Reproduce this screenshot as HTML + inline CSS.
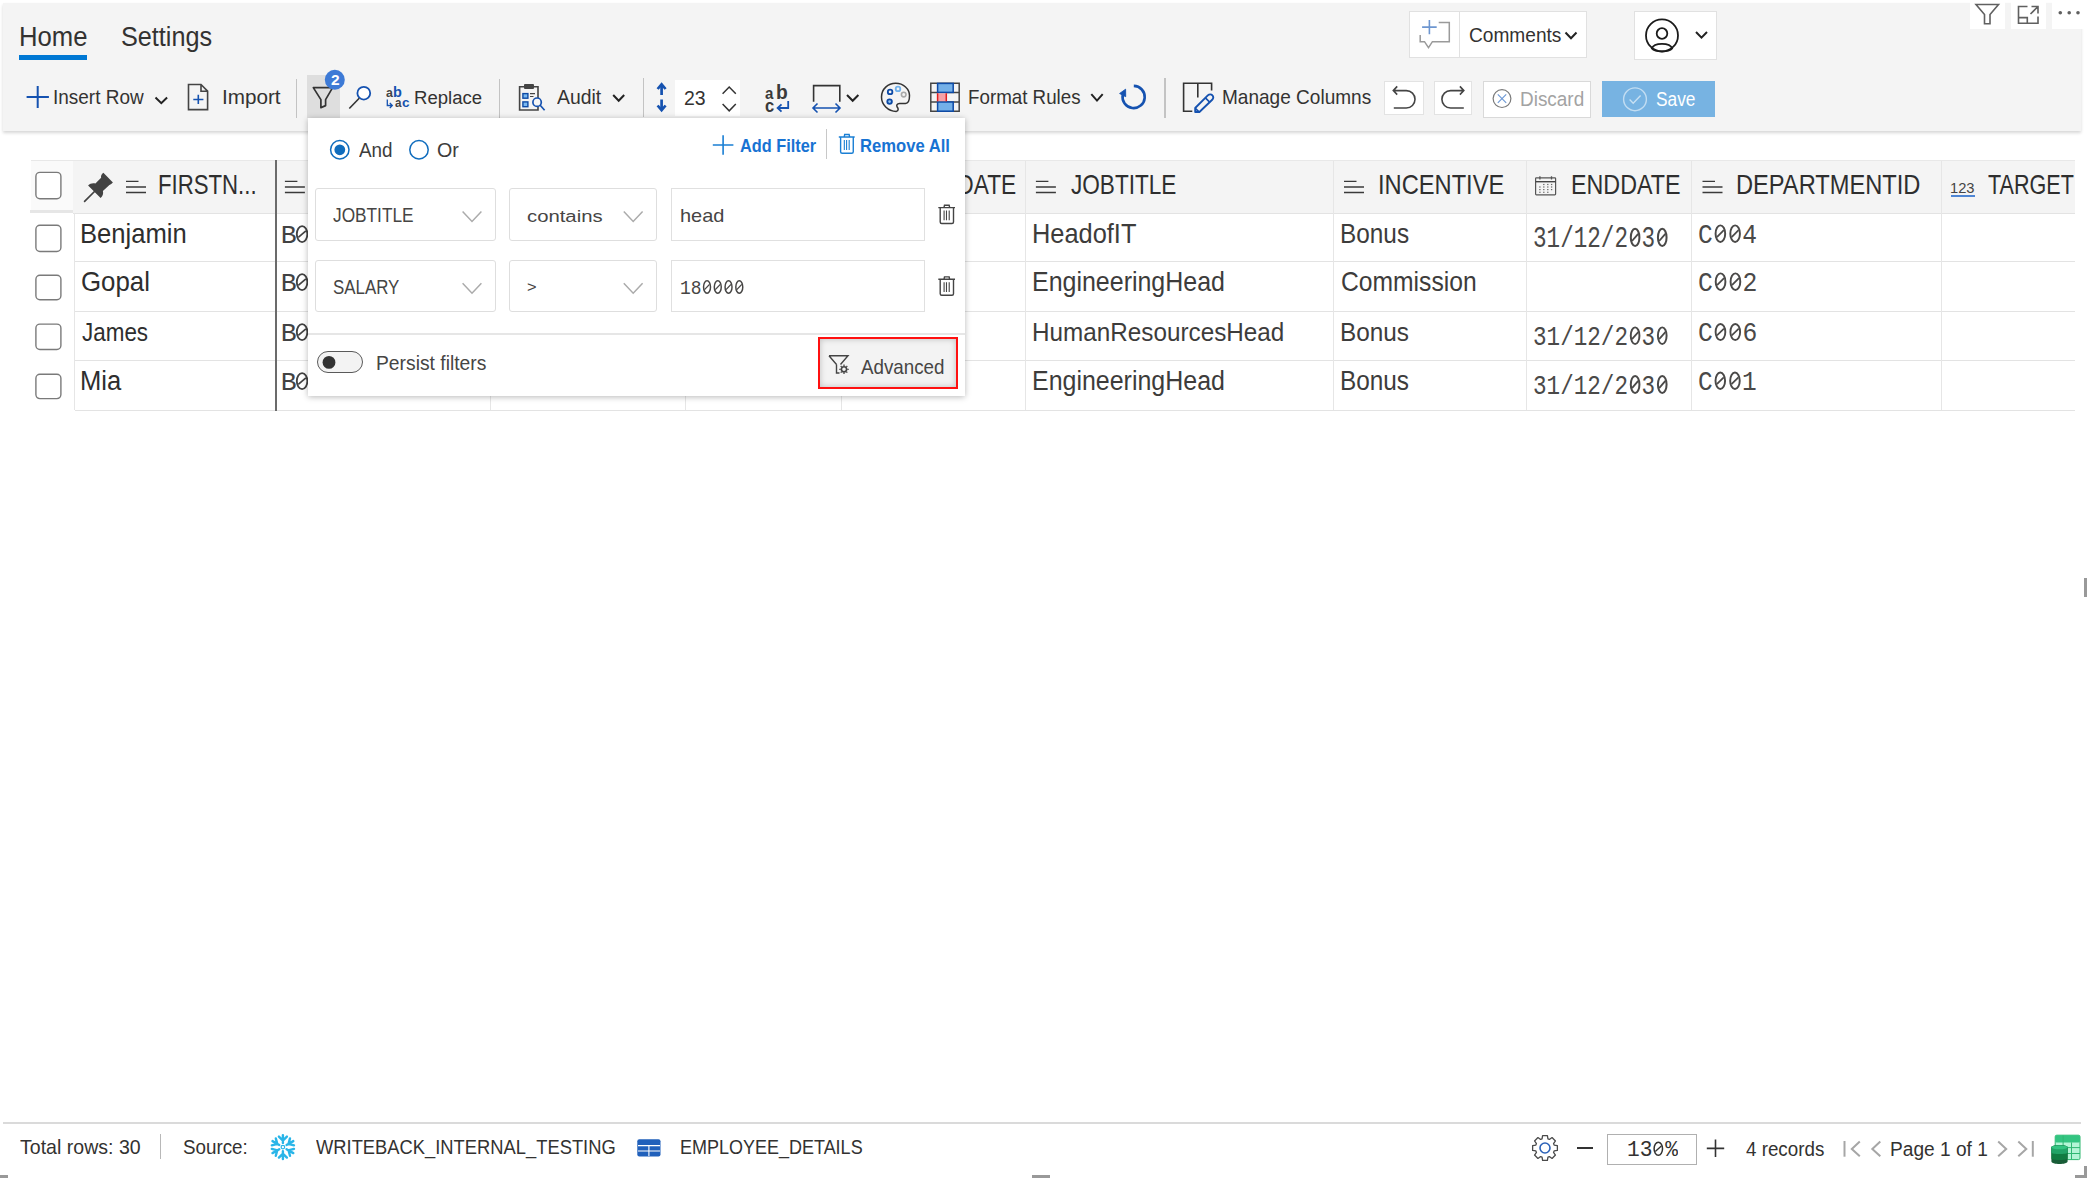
<!DOCTYPE html>
<html><head><meta charset="utf-8"><title>Grid</title>
<style>html,body{margin:0;padding:0;width:2087px;height:1178px;overflow:hidden;background:#fff;font-family:'Liberation Sans', sans-serif;}
body{position:relative;}</style></head>
<body>
<div style="position:absolute;left:0;top:0;width:2087px;height:1178px;z-index:2;"><div style="position:absolute;left:3px;top:3px;width:2078px;height:128px;background:#f4f4f4;border-radius:0px;box-shadow:0 2px 3px rgba(0,0,0,0.16);"></div>
<div style="position:absolute;left:1970px;top:0px;width:35px;height:29px;background:#fff;border-radius:0px;"></div>
<div style="position:absolute;left:2011px;top:0px;width:35px;height:29px;background:#fff;border-radius:0px;"></div>
<div style="position:absolute;left:2052px;top:0px;width:35px;height:29px;background:#fff;border-radius:0px;"></div>
<div style="position:absolute;left:19px;top:55px;width:68px;height:4.5px;background:#0078d4;border-radius:0px;"></div>
<div style="position:absolute;left:1408.7px;top:11px;width:177.89999999999986px;height:47.4px;background:#fff;border:1px solid #e1e1e1;box-sizing:border-box;border-radius:0px;"></div>
<div style="position:absolute;left:1459.2px;top:11.5px;width:1.0px;height:46.5px;background:#e1e1e1;border-radius:0px;"></div>
<div style="position:absolute;left:1634.3px;top:11.3px;width:83.20000000000005px;height:48.3px;background:#fff;border:1px solid #e1e1e1;box-sizing:border-box;border-radius:0px;"></div>
<div style="position:absolute;left:295.9px;top:78.5px;width:1.2000000000000455px;height:39.0px;background:#c3c3c3;border-radius:0px;"></div>
<div style="position:absolute;left:498.7px;top:78.5px;width:1.2000000000000455px;height:39.0px;background:#c3c3c3;border-radius:0px;"></div>
<div style="position:absolute;left:642.9px;top:78px;width:1.2000000000000455px;height:38.7px;background:#c3c3c3;border-radius:0px;"></div>
<div style="position:absolute;left:1164.4px;top:78px;width:1.199999999999818px;height:40px;background:#c3c3c3;border-radius:0px;"></div>
<div style="position:absolute;left:307px;top:75px;width:33px;height:43px;background:#dedede;border-radius:0px;"></div>
<div style="position:absolute;left:524.3px;top:84.3px;width:9.300000000000068px;height:4.400000000000006px;background:#444;border-radius:1px;"></div>
<div style="position:absolute;left:675px;top:80px;width:65.39999999999998px;height:35.5px;background:#fff;border-radius:0px;"></div>
<div style="position:absolute;left:1384.4px;top:80.6px;width:39.299999999999955px;height:34.900000000000006px;background:#fff;border:1px solid #e3e3e3;box-sizing:border-box;border-radius:0px;"></div>
<div style="position:absolute;left:1434.2px;top:80.6px;width:38.299999999999955px;height:34.900000000000006px;background:#fff;border:1px solid #e3e3e3;box-sizing:border-box;border-radius:0px;"></div>
<div style="position:absolute;left:1483.4px;top:80.6px;width:108.0px;height:37.0px;background:#fff;border:1px solid #d9d9d9;box-sizing:border-box;border-radius:0px;"></div>
<div style="position:absolute;left:1601.8px;top:81px;width:113.0px;height:35.7px;background:#77b3e2;border-radius:0px;"></div>
<div style="position:absolute;left:73px;top:160px;width:2001.5px;height:53px;background:#f4f4f4;border-radius:0px;"></div>
<div style="position:absolute;left:30.5px;top:160px;width:42.5px;height:53px;background:#fafafa;border-radius:0px;"></div>
<div style="position:absolute;left:30.5px;top:160px;width:2044.0px;height:1px;background:#e8e8e8;border-radius:0px;"></div>
<div style="position:absolute;left:30px;top:210px;width:43px;height:3px;background:#e6e6e6;border-radius:0px;"></div>
<div style="position:absolute;left:73px;top:212.5px;width:2001.5px;height:1.0px;background:#e3e3e3;border-radius:0px;"></div>
<div style="position:absolute;left:74.5px;top:261.0px;width:2000.0px;height:1.0px;background:#e3e3e3;border-radius:0px;"></div>
<div style="position:absolute;left:74.5px;top:311.3px;width:2000.0px;height:1.0px;background:#e3e3e3;border-radius:0px;"></div>
<div style="position:absolute;left:74.5px;top:360.3px;width:2000.0px;height:1.0px;background:#e3e3e3;border-radius:0px;"></div>
<div style="position:absolute;left:74.5px;top:409.7px;width:2000.0px;height:1.0px;background:#e3e3e3;border-radius:0px;"></div>
<div style="position:absolute;left:74.1px;top:213px;width:1.0px;height:197.2px;background:#e6e6e6;border-radius:0px;"></div>
<div style="position:absolute;left:489.5px;top:161px;width:1.0px;height:249.2px;background:#e6e6e6;border-radius:0px;"></div>
<div style="position:absolute;left:685.0px;top:161px;width:1.0px;height:249.2px;background:#e6e6e6;border-radius:0px;"></div>
<div style="position:absolute;left:841.0px;top:161px;width:1.0px;height:249.2px;background:#e6e6e6;border-radius:0px;"></div>
<div style="position:absolute;left:1024.5px;top:161px;width:1.0px;height:249.2px;background:#e6e6e6;border-radius:0px;"></div>
<div style="position:absolute;left:1333.0px;top:161px;width:1.0px;height:249.2px;background:#e6e6e6;border-radius:0px;"></div>
<div style="position:absolute;left:1525.5px;top:161px;width:1.0px;height:249.2px;background:#e6e6e6;border-radius:0px;"></div>
<div style="position:absolute;left:1691.0px;top:161px;width:1.0px;height:249.2px;background:#e6e6e6;border-radius:0px;"></div>
<div style="position:absolute;left:1941.0px;top:161px;width:1.0px;height:249.2px;background:#e6e6e6;border-radius:0px;"></div>
<div style="position:absolute;left:274.5px;top:160px;width:2.3000000000000114px;height:250.7px;background:#6b6b6b;border-radius:0px;"></div>
<div style="position:absolute;left:1951px;top:195px;width:24px;height:1.5999999999999943px;background:#4f86d4;border-radius:0px;"></div>
<div style="position:absolute;left:3px;top:1122px;width:2077.5px;height:1.7999999999999545px;background:#dadada;border-radius:0px;"></div>
<div style="position:absolute;left:159.6px;top:1133.8px;width:1.200000000000017px;height:25.0px;background:#b8b8b8;border-radius:0px;"></div>
<div style="position:absolute;left:1577px;top:1147.3px;width:16.299999999999955px;height:1.5px;background:#333;border-radius:0px;"></div>
<div style="position:absolute;left:1607.4px;top:1133.5px;width:89.19999999999982px;height:31.700000000000045px;background:#fff;border:1px solid #b0b0b0;box-sizing:border-box;border-radius:0px;"></div>
<div style="position:absolute;left:0px;top:1175px;width:7.7px;height:3px;background:#999;border-radius:0px;"></div>
<div style="position:absolute;left:1032px;top:1175px;width:18px;height:3px;background:#999;border-radius:0px;"></div>
<div style="position:absolute;left:2084px;top:578px;width:3px;height:19px;background:#999;border-radius:0px;"></div>
<div style="position:absolute;left:2084.3px;top:1166px;width:2.699999999999818px;height:12px;background:#999;border-radius:0px;"></div>
<div style="position:absolute;left:2075px;top:1175.1px;width:12px;height:2.900000000000091px;background:#999;border-radius:0px;"></div>
<span style="position:absolute;left:18.95px;top:23px;font-family:'Liberation Sans', sans-serif;font-size:27.25px;line-height:1;font-weight:400;color:#333231;white-space:pre;transform:scaleX(0.9421);transform-origin:0 0;">Home</span>
<span style="position:absolute;left:120.79px;top:23px;font-family:'Liberation Sans', sans-serif;font-size:27.1px;line-height:1;font-weight:400;color:#333231;white-space:pre;transform:scaleX(0.9310);transform-origin:0 0;">Settings</span>
<span style="position:absolute;left:1468.64px;top:25px;font-family:'Liberation Sans', sans-serif;font-size:20.0px;line-height:1;font-weight:400;color:#333231;white-space:pre;transform:scaleX(0.9559);transform-origin:0 0;">Comments</span>
<span style="position:absolute;left:52.89px;top:87px;font-family:'Liberation Sans', sans-serif;font-size:20.43px;line-height:1;font-weight:400;color:#333231;white-space:pre;transform:scaleX(0.9285);transform-origin:0 0;">Insert Row</span>
<span style="position:absolute;left:221.64px;top:87px;font-family:'Liberation Sans', sans-serif;font-size:20.43px;line-height:1;font-weight:400;color:#333231;white-space:pre;transform:scaleX(1.0124);transform-origin:0 0;">Import</span>
<span style="position:absolute;left:385.75px;top:86px;font-family:'Liberation Sans', sans-serif;font-size:13.52px;line-height:1;font-weight:700;color:#444;white-space:pre;transform:scaleX(0.9145);transform-origin:0 0;">a</span>
<span style="position:absolute;left:392.93px;top:85px;font-family:'Liberation Sans', sans-serif;font-size:14.29px;line-height:1;font-weight:700;color:#1552b0;white-space:pre;transform:scaleX(1.0154);transform-origin:0 0;">b</span>
<span style="position:absolute;left:394.67px;top:96px;font-family:'Liberation Sans', sans-serif;font-size:13.33px;line-height:1;font-weight:700;color:#444;white-space:pre;transform:scaleX(0.8729);transform-origin:0 0;">a</span>
<span style="position:absolute;left:401.89px;top:96px;font-family:'Liberation Sans', sans-serif;font-size:13.33px;line-height:1;font-weight:700;color:#1552b0;white-space:pre;transform:scaleX(1.0203);transform-origin:0 0;">c</span>
<span style="position:absolute;left:413.92px;top:88px;font-family:'Liberation Sans', sans-serif;font-size:18.99px;line-height:1;font-weight:400;color:#333231;white-space:pre;transform:scaleX(0.9768);transform-origin:0 0;">Replace</span>
<span style="position:absolute;left:557.30px;top:87px;font-family:'Liberation Sans', sans-serif;font-size:20.43px;line-height:1;font-weight:400;color:#333231;white-space:pre;transform:scaleX(0.9483);transform-origin:0 0;">Audit</span>
<span style="position:absolute;left:684.03px;top:87px;font-family:'Liberation Sans', sans-serif;font-size:21.01px;line-height:1;font-weight:400;color:#333231;white-space:pre;transform:scaleX(0.9277);transform-origin:0 0;">23</span>
<span style="position:absolute;left:765.00px;top:85px;font-family:'Liberation Sans', sans-serif;font-size:17.22px;line-height:1;font-weight:700;color:#3a3a3a;white-space:pre;transform:scaleX(0.8764);transform-origin:0 0;">a</span>
<span style="position:absolute;left:775.85px;top:82px;font-family:'Liberation Sans', sans-serif;font-size:20.86px;line-height:1;font-weight:700;color:#3a3a3a;white-space:pre;transform:scaleX(0.9212);transform-origin:0 0;">b</span>
<span style="position:absolute;left:764.90px;top:98px;font-family:'Liberation Sans', sans-serif;font-size:17.78px;line-height:1;font-weight:700;color:#3a3a3a;white-space:pre;transform:scaleX(0.9336);transform-origin:0 0;">c</span>
<span style="position:absolute;left:967.50px;top:87px;font-family:'Liberation Sans', sans-serif;font-size:20.14px;line-height:1;font-weight:400;color:#333231;white-space:pre;transform:scaleX(0.9321);transform-origin:0 0;">Format Rules</span>
<span style="position:absolute;left:1221.98px;top:87px;font-family:'Liberation Sans', sans-serif;font-size:20.14px;line-height:1;font-weight:400;color:#333231;white-space:pre;transform:scaleX(0.9458);transform-origin:0 0;">Manage Columns</span>
<span style="position:absolute;left:1520.19px;top:90px;font-family:'Liberation Sans', sans-serif;font-size:19.86px;line-height:1;font-weight:400;color:#a3a3a3;white-space:pre;transform:scaleX(0.9533);transform-origin:0 0;">Discard</span>
<span style="position:absolute;left:1655.91px;top:90px;font-family:'Liberation Sans', sans-serif;font-size:19.57px;line-height:1;font-weight:400;color:#fff;white-space:pre;transform:scaleX(0.8860);transform-origin:0 0;">Save</span>
<span style="position:absolute;left:158.32px;top:171px;font-family:'Liberation Sans', sans-serif;font-size:27.1px;line-height:1;font-weight:400;color:#2e2e2e;white-space:pre;transform:scaleX(0.8189);transform-origin:0 0;">FIRSTN...</span>
<span style="position:absolute;left:903.18px;top:171px;font-family:'Liberation Sans', sans-serif;font-size:27.1px;line-height:1;font-weight:400;color:#2e2e2e;white-space:pre;transform:scaleX(0.8389);transform-origin:0 0;">HIREDATE</span>
<span style="position:absolute;left:1070.97px;top:171px;font-family:'Liberation Sans', sans-serif;font-size:27.1px;line-height:1;font-weight:400;color:#2e2e2e;white-space:pre;transform:scaleX(0.8338);transform-origin:0 0;">JOBTITLE</span>
<span style="position:absolute;left:1378.07px;top:171px;font-family:'Liberation Sans', sans-serif;font-size:27.1px;line-height:1;font-weight:400;color:#2e2e2e;white-space:pre;transform:scaleX(0.8738);transform-origin:0 0;">INCENTIVE</span>
<span style="position:absolute;left:1571.14px;top:171px;font-family:'Liberation Sans', sans-serif;font-size:27.1px;line-height:1;font-weight:400;color:#2e2e2e;white-space:pre;transform:scaleX(0.8591);transform-origin:0 0;">ENDDATE</span>
<span style="position:absolute;left:1735.91px;top:171px;font-family:'Liberation Sans', sans-serif;font-size:27.1px;line-height:1;font-weight:400;color:#2e2e2e;white-space:pre;transform:scaleX(0.8727);transform-origin:0 0;">DEPARTMENTID</span>
<span style="position:absolute;left:1950.47px;top:180px;font-family:'Liberation Sans', sans-serif;font-size:15.51px;line-height:1;font-weight:400;color:#444;white-space:pre;transform:scaleX(0.9492);transform-origin:0 0;">123</span>
<div style="position:absolute;left:1942px;top:160px;width:132.5px;height:53px;overflow:hidden;"><div style="position:absolute;left:-1942px;top:-160px;"><span style="position:absolute;left:1987.57px;top:171px;font-family:'Liberation Sans', sans-serif;font-size:27.1px;line-height:1;font-weight:400;color:#2e2e2e;white-space:pre;transform:scaleX(0.7960);transform-origin:0 0;">TARGET</span></div></div>
<span style="position:absolute;left:80.25px;top:221px;font-family:'Liberation Sans', sans-serif;font-size:26.96px;line-height:1;font-weight:400;color:#2e2e2e;white-space:pre;transform:scaleX(0.9501);transform-origin:0 0;">Benjamin</span>
<span style="position:absolute;left:280.75px;top:223px;font-family:'Liberation Mono', monospace;font-size:26.5px;line-height:1;font-weight:400;color:#424242;white-space:pre;letter-spacing:-2.5px;">B  1</span>
<span style="position:absolute;left:1031.57px;top:221px;font-family:'Liberation Sans', sans-serif;font-size:26.96px;line-height:1;font-weight:400;color:#3d3c3b;white-space:pre;transform:scaleX(0.9420);transform-origin:0 0;">HeadofIT</span>
<span style="position:absolute;left:1340.35px;top:221px;font-family:'Liberation Sans', sans-serif;font-size:26.96px;line-height:1;font-weight:400;color:#3d3c3b;white-space:pre;transform:scaleX(0.9037);transform-origin:0 0;">Bonus</span>
<span style="position:absolute;left:1533.34px;top:226px;font-family:'Liberation Mono', monospace;font-size:28.66px;line-height:1;font-weight:400;color:#4a4948;white-space:pre;transform:scaleX(0.7891);transform-origin:0 0;">31/12/2 3 </span>
<span style="position:absolute;left:1698.27px;top:222px;font-family:'Liberation Mono', monospace;font-size:27.76px;line-height:1;font-weight:400;color:#4a4948;white-space:pre;transform:scaleX(0.8848);transform-origin:0 0;">C  4</span>
<span style="position:absolute;left:81.01px;top:269px;font-family:'Liberation Sans', sans-serif;font-size:26.96px;line-height:1;font-weight:400;color:#2e2e2e;white-space:pre;transform:scaleX(0.9577);transform-origin:0 0;">Gopal</span>
<span style="position:absolute;left:280.75px;top:271px;font-family:'Liberation Mono', monospace;font-size:26.5px;line-height:1;font-weight:400;color:#424242;white-space:pre;letter-spacing:-2.5px;">B  1</span>
<span style="position:absolute;left:1031.60px;top:269px;font-family:'Liberation Sans', sans-serif;font-size:26.96px;line-height:1;font-weight:400;color:#3d3c3b;white-space:pre;transform:scaleX(0.9263);transform-origin:0 0;">EngineeringHead</span>
<span style="position:absolute;left:1341.07px;top:269px;font-family:'Liberation Sans', sans-serif;font-size:26.96px;line-height:1;font-weight:400;color:#3d3c3b;white-space:pre;transform:scaleX(0.9151);transform-origin:0 0;">Commission</span>
<span style="position:absolute;left:1698.26px;top:270px;font-family:'Liberation Mono', monospace;font-size:27.76px;line-height:1;font-weight:400;color:#4a4948;white-space:pre;transform:scaleX(0.8926);transform-origin:0 0;">C  2</span>
<span style="position:absolute;left:82.08px;top:319px;font-family:'Liberation Sans', sans-serif;font-size:26.09px;line-height:1;font-weight:400;color:#2e2e2e;white-space:pre;transform:scaleX(0.8602);transform-origin:0 0;">James</span>
<span style="position:absolute;left:280.75px;top:321px;font-family:'Liberation Mono', monospace;font-size:26.5px;line-height:1;font-weight:400;color:#424242;white-space:pre;letter-spacing:-2.5px;">B  1</span>
<span style="position:absolute;left:1031.66px;top:319px;font-family:'Liberation Sans', sans-serif;font-size:26.09px;line-height:1;font-weight:400;color:#3d3c3b;white-space:pre;transform:scaleX(0.9308);transform-origin:0 0;">HumanResourcesHead</span>
<span style="position:absolute;left:1340.35px;top:319px;font-family:'Liberation Sans', sans-serif;font-size:26.09px;line-height:1;font-weight:400;color:#3d3c3b;white-space:pre;transform:scaleX(0.9338);transform-origin:0 0;">Bonus</span>
<span style="position:absolute;left:1533.34px;top:324px;font-family:'Liberation Mono', monospace;font-size:27.76px;line-height:1;font-weight:400;color:#4a4948;white-space:pre;transform:scaleX(0.8147);transform-origin:0 0;">31/12/2 3 </span>
<span style="position:absolute;left:1698.27px;top:321px;font-family:'Liberation Mono', monospace;font-size:26.87px;line-height:1;font-weight:400;color:#4a4948;white-space:pre;transform:scaleX(0.9181);transform-origin:0 0;">C  6</span>
<span style="position:absolute;left:80.25px;top:368px;font-family:'Liberation Sans', sans-serif;font-size:26.81px;line-height:1;font-weight:400;color:#2e2e2e;white-space:pre;transform:scaleX(0.9549);transform-origin:0 0;">Mia</span>
<span style="position:absolute;left:280.75px;top:370px;font-family:'Liberation Mono', monospace;font-size:26.5px;line-height:1;font-weight:400;color:#424242;white-space:pre;letter-spacing:-2.5px;">B  1</span>
<span style="position:absolute;left:1031.60px;top:368px;font-family:'Liberation Sans', sans-serif;font-size:26.81px;line-height:1;font-weight:400;color:#3d3c3b;white-space:pre;transform:scaleX(0.9315);transform-origin:0 0;">EngineeringHead</span>
<span style="position:absolute;left:1340.35px;top:368px;font-family:'Liberation Sans', sans-serif;font-size:26.81px;line-height:1;font-weight:400;color:#3d3c3b;white-space:pre;transform:scaleX(0.9087);transform-origin:0 0;">Bonus</span>
<span style="position:absolute;left:1533.34px;top:373px;font-family:'Liberation Mono', monospace;font-size:28.51px;line-height:1;font-weight:400;color:#4a4948;white-space:pre;transform:scaleX(0.7933);transform-origin:0 0;">31/12/2 3 </span>
<span style="position:absolute;left:1698.28px;top:369px;font-family:'Liberation Mono', monospace;font-size:27.61px;line-height:1;font-weight:400;color:#4a4948;white-space:pre;transform:scaleX(0.8858);transform-origin:0 0;">C  1</span>
<span style="position:absolute;left:19.51px;top:1137px;font-family:'Liberation Sans', sans-serif;font-size:20.29px;line-height:1;font-weight:400;color:#333231;white-space:pre;transform:scaleX(0.9642);transform-origin:0 0;">Total rows: 30</span>
<span style="position:absolute;left:182.95px;top:1137px;font-family:'Liberation Sans', sans-serif;font-size:20.29px;line-height:1;font-weight:400;color:#333231;white-space:pre;transform:scaleX(0.9268);transform-origin:0 0;">Source:</span>
<span style="position:absolute;left:316.40px;top:1137px;font-family:'Liberation Sans', sans-serif;font-size:20.29px;line-height:1;font-weight:400;color:#333231;white-space:pre;transform:scaleX(0.9046);transform-origin:0 0;">WRITEBACK_INTERNAL_TESTING</span>
<span style="position:absolute;left:680.46px;top:1137px;font-family:'Liberation Sans', sans-serif;font-size:20.29px;line-height:1;font-weight:400;color:#333231;white-space:pre;transform:scaleX(0.8870);transform-origin:0 0;">EMPLOYEE_DETAILS</span>
<span style="position:absolute;left:1626.52px;top:1140px;font-family:'Liberation Mono', monospace;font-size:21.64px;line-height:1;font-weight:400;color:#333231;white-space:pre;transform:scaleX(0.9794);transform-origin:0 0;">13 %</span>
<span style="position:absolute;left:1745.82px;top:1139px;font-family:'Liberation Sans', sans-serif;font-size:20.71px;line-height:1;font-weight:400;color:#333231;white-space:pre;transform:scaleX(0.9075);transform-origin:0 0;">4 records</span>
<span style="position:absolute;left:1890.07px;top:1139px;font-family:'Liberation Sans', sans-serif;font-size:20.0px;line-height:1;font-weight:400;color:#333231;white-space:pre;transform:scaleX(0.9561);transform-origin:0 0;">Page 1 of 1</span></div>
<svg style="position:absolute;left:0;top:0;z-index:3;" width="2087" height="1178" viewBox="0 0 2087 1178" fill="none"><ellipse cx="302.09" cy="234.12" rx="5.30" ry="7.95" stroke="#424242" stroke-width="1.86"/><path d="M298.28,237.46 L305.91,230.78" stroke="#424242" stroke-width="1.67"/>
<ellipse cx="315.50" cy="234.12" rx="5.30" ry="7.95" stroke="#424242" stroke-width="1.86"/><path d="M311.68,237.46 L319.31,230.78" stroke="#424242" stroke-width="1.67"/>
<ellipse cx="1635.11" cy="237.40" rx="4.31" ry="8.60" stroke="#4a4948" stroke-width="2.01"/><path d="M1632.01,241.01 L1638.22,233.79" stroke="#4a4948" stroke-width="1.81"/>
<ellipse cx="1662.25" cy="237.40" rx="4.31" ry="8.60" stroke="#4a4948" stroke-width="2.01"/><path d="M1659.15,241.01 L1665.36,233.79" stroke="#4a4948" stroke-width="1.81"/>
<ellipse cx="1720.38" cy="233.70" rx="4.80" ry="8.33" stroke="#4a4948" stroke-width="1.94"/><path d="M1716.92,237.20 L1723.83,230.20" stroke="#4a4948" stroke-width="1.75"/>
<ellipse cx="1735.12" cy="233.70" rx="4.80" ry="8.33" stroke="#4a4948" stroke-width="1.94"/><path d="M1731.66,237.20 L1738.57,230.20" stroke="#4a4948" stroke-width="1.75"/>
<ellipse cx="302.09" cy="282.12" rx="5.30" ry="7.95" stroke="#424242" stroke-width="1.86"/><path d="M298.28,285.46 L305.91,278.78" stroke="#424242" stroke-width="1.67"/>
<ellipse cx="315.50" cy="282.12" rx="5.30" ry="7.95" stroke="#424242" stroke-width="1.86"/><path d="M311.68,285.46 L319.31,278.78" stroke="#424242" stroke-width="1.67"/>
<ellipse cx="1720.56" cy="281.70" rx="4.85" ry="8.33" stroke="#4a4948" stroke-width="1.94"/><path d="M1717.07,285.20 L1724.05,278.20" stroke="#4a4948" stroke-width="1.75"/>
<ellipse cx="1735.43" cy="281.70" rx="4.85" ry="8.33" stroke="#4a4948" stroke-width="1.94"/><path d="M1731.93,285.20 L1738.92,278.20" stroke="#4a4948" stroke-width="1.75"/>
<ellipse cx="302.09" cy="332.12" rx="5.30" ry="7.95" stroke="#424242" stroke-width="1.86"/><path d="M298.28,335.46 L305.91,328.78" stroke="#424242" stroke-width="1.67"/>
<ellipse cx="315.50" cy="332.12" rx="5.30" ry="7.95" stroke="#424242" stroke-width="1.86"/><path d="M311.68,335.46 L319.31,328.78" stroke="#424242" stroke-width="1.67"/>
<ellipse cx="1635.11" cy="335.70" rx="4.34" ry="8.33" stroke="#4a4948" stroke-width="1.94"/><path d="M1631.99,339.20 L1638.24,332.20" stroke="#4a4948" stroke-width="1.75"/>
<ellipse cx="1662.25" cy="335.70" rx="4.34" ry="8.33" stroke="#4a4948" stroke-width="1.94"/><path d="M1659.13,339.20 L1665.38,332.20" stroke="#4a4948" stroke-width="1.75"/>
<ellipse cx="1720.47" cy="332.00" rx="4.86" ry="8.06" stroke="#4a4948" stroke-width="1.88"/><path d="M1716.97,335.38 L1723.97,328.61" stroke="#4a4948" stroke-width="1.69"/>
<ellipse cx="1735.27" cy="332.00" rx="4.86" ry="8.06" stroke="#4a4948" stroke-width="1.88"/><path d="M1731.77,335.38 L1738.77,328.61" stroke="#4a4948" stroke-width="1.69"/>
<ellipse cx="302.09" cy="381.12" rx="5.30" ry="7.95" stroke="#424242" stroke-width="1.86"/><path d="M298.28,384.46 L305.91,377.78" stroke="#424242" stroke-width="1.67"/>
<ellipse cx="315.50" cy="381.12" rx="5.30" ry="7.95" stroke="#424242" stroke-width="1.86"/><path d="M311.68,384.46 L319.31,377.78" stroke="#424242" stroke-width="1.67"/>
<ellipse cx="1635.11" cy="384.45" rx="4.32" ry="8.55" stroke="#4a4948" stroke-width="2.00"/><path d="M1632.01,388.04 L1638.22,380.86" stroke="#4a4948" stroke-width="1.80"/>
<ellipse cx="1662.25" cy="384.45" rx="4.32" ry="8.55" stroke="#4a4948" stroke-width="2.00"/><path d="M1659.14,388.04 L1665.36,380.86" stroke="#4a4948" stroke-width="1.80"/>
<ellipse cx="1720.29" cy="380.75" rx="4.78" ry="8.28" stroke="#4a4948" stroke-width="1.93"/><path d="M1716.85,384.23 L1723.73,377.27" stroke="#4a4948" stroke-width="1.74"/>
<ellipse cx="1734.96" cy="380.75" rx="4.78" ry="8.28" stroke="#4a4948" stroke-width="1.93"/><path d="M1731.52,384.23 L1738.40,377.27" stroke="#4a4948" stroke-width="1.74"/>
<ellipse cx="1658.31" cy="1148.75" rx="4.22" ry="6.49" stroke="#333231" stroke-width="1.51"/><path d="M1655.27,1151.48 L1661.35,1146.02" stroke="#333231" stroke-width="1.36"/></svg>
<svg style="position:absolute;left:0;top:0;z-index:5;" width="2087" height="1178" viewBox="0 0 2087 1178" fill="none"><path d="M1976,4.5 H1998.5 L1990,14.5 V23.8 H1984.5 V14.5 Z" stroke="#606060" stroke-width="1.6" stroke-linejoin="miter"/>
<path d="M2027.5,6.5 H2018.5 V23.2 H2038 V16.5 M2018.5,17.6 H2027.3 V23.2 M2031.5,6.5 H2038 V13.5 M2038,6.5 L2030.5,14" stroke="#606060" stroke-width="1.6"/>
<circle cx="2060.3" cy="12.8" r="1.8" fill="#606060"/>
<circle cx="2069.2" cy="12.8" r="1.8" fill="#606060"/>
<circle cx="2078" cy="12.8" r="1.8" fill="#606060"/>
<path d="M1438.7,22.4 H1449.3 V41.7 H1432.4 L1428.5,47.7 L1424.5,41.7 H1420.2 V35" stroke="#9a9a9a" stroke-width="1.5"/>
<path d="M1422.1,27.1 H1436.7 M1429.4,20 V34.3" stroke="#6d96d0" stroke-width="1.6"/>
<path d="M1565.5,32.5 L1571,38.3 L1576.5,32.5" stroke="#222" stroke-width="2"/>
<circle cx="1662" cy="35.4" r="16" stroke="#1b1b1b" stroke-width="1.8"/>
<circle cx="1662" cy="33.5" r="5.3" stroke="#1b1b1b" stroke-width="1.8"/>
<path d="M1651.8,48.5 C1654,42.3 1670,42.3 1672.2,48.5 C1668.5,52.5 1655.5,52.5 1651.8,48.5 Z" stroke="#1b1b1b" stroke-width="1.8"/>
<path d="M1696,32 L1701.5,37.6 L1707,32" stroke="#222" stroke-width="2"/>
<path d="M26.6,97 H48.9 M37.7,86 V108" stroke="#1552b0" stroke-width="2"/>
<path d="M155.5,97.5 L161.3,103.2 L167.1,97.5" stroke="#222" stroke-width="2"/>
<path d="M188.5,84.5 H201 L207.6,91.2 V109.6 H188.5 Z M201,84.5 V91.2 H207.6" stroke="#444" stroke-width="1.6" stroke-linejoin="miter"/>
<path d="M193.3,99.5 H203.4 M198.3,94.8 V104" stroke="#1552b0" stroke-width="1.6"/>
<path d="M313.3,87.6 H332.6 L325.6,99.6 V105.6 L320.9,107.6 V99.6 Z" stroke="#333" stroke-width="1.7" stroke-linejoin="round"/>
<circle cx="334.8" cy="79.8" r="10" fill="#3d7ad6"/>
<circle cx="363.8" cy="93.2" r="6.4" fill="#fff" stroke="#1552b0" stroke-width="1.8"/>
<path d="M349.3,108.5 L359.2,98.3" stroke="#333" stroke-width="1.6"/>
<path d="M387.3,99.5 V105.5 H392 M389.8,103 L392.3,105.5 L389.8,108" stroke="#1552b0" stroke-width="1.3"/>
<path d="M519.6,86.8 H538 V110 H519.6 Z" stroke="#444" stroke-width="1.6"/>
<rect x="522.9" y="93.6" width="5" height="4.6" fill="#7ab8f0" stroke="#0d4aa6" stroke-width="1.4"/>
<rect x="522.9" y="101.9" width="5" height="4.8" fill="#7ab8f0" stroke="#0d4aa6" stroke-width="1.4"/>
<path d="M530,93.6 H535 M530,96.5 H533.5" stroke="#444" stroke-width="1.2"/>
<circle cx="537.1" cy="102.2" r="4.2" fill="#f6f6f6" stroke="#1552b0" stroke-width="1.7"/>
<path d="M540.2,105.3 L544.6,110.2" stroke="#1552b0" stroke-width="1.7"/>
<path d="M613.2,95 L618.7,100.8 L624.2,95" stroke="#222" stroke-width="2"/>
<path d="M661.6,84.5 V95 M661.6,99.5 V110" stroke="#1552b0" stroke-width="2.7"/>
<path d="M657.6,89 L661.6,84.3 L665.6,89 M657.6,105.5 L661.6,110.2 L665.6,105.5" stroke="#1552b0" stroke-width="2.7" stroke-linejoin="miter"/>
<path d="M722.6,93.8 L729.2,87 L735.8,93.8 M722.6,104 L729.2,110.8 L735.8,104" stroke="#333" stroke-width="1.5"/>
<path d="M788.2,101 V108 H778 M781.5,104.3 L777.6,108 L781.5,111.7" stroke="#1552b0" stroke-width="1.8"/>
<path d="M813.6,101.8 V85.6 H839.8 V101.8" stroke="#333" stroke-width="1.6"/>
<path d="M813,108 H840 M817.5,103.5 L813,108 L817.5,112.5 M835.5,103.5 L840,108 L835.5,112.5" stroke="#1552b0" stroke-width="1.6"/>
<path d="M847,95 L852.7,100.8 L858.4,95" stroke="#222" stroke-width="2"/>
<path d="M895.7,83.3 C903.5,83.3 909.5,89 909.5,95.5 C909.5,99.5 908.5,103.4 905.5,103.4 L899.5,103.4 C897,103.4 896.2,105.3 897.2,107 C898.6,108.8 898.6,110.6 896.3,111.4 C887.8,111.4 881.5,104.5 881.5,97 C881.5,89 888,83.3 895.7,83.3 Z" stroke="#333" stroke-width="1.5"/>
<circle cx="890.1" cy="91.9" r="2.3" stroke="#0d4aa6" stroke-width="1.8"/>
<circle cx="898" cy="88.9" r="2.3" stroke="#72b2ec" stroke-width="1.8"/>
<circle cx="903.7" cy="94.6" r="2.3" stroke="#a8a8a8" stroke-width="1.6"/>
<circle cx="889.6" cy="101.6" r="2.3" fill="#8fc2f0" stroke="#0d4aa6" stroke-width="1.8"/>
<path d="M930.8,83.2 H959.2 V111.3 H930.8 Z M930.8,92.6 H959.2 M930.8,102 H959.2" stroke="#454545" stroke-width="1.5"/>
<rect x="937.6" y="83.4" width="15.6" height="9" fill="#74b0e8" stroke="#0d4aa6" stroke-width="1.5"/>
<rect x="937.6" y="102" width="15.6" height="9.2" fill="#74b0e8" stroke="#0d4aa6" stroke-width="1.5"/>
<rect x="937.6" y="93.4" width="8.7" height="7.8" fill="#f7a1a6"/>
<path d="M937.6,93.3 V101.3 M946.3,93.3 V101.3" stroke="#e01e1e" stroke-width="1.5"/>
<path d="M1091.3,94.2 L1097,100.6 L1102.7,94.2" stroke="#222" stroke-width="2"/>
<path d="M1133.8,85.9 A11.1,11.1 0 1 1 1122.7,95" stroke="#1552b0" stroke-width="2.6"/>
<path d="M1119.6,93.5 L1125.6,89.2 L1125.7,96.7 Z" fill="#1552b0" stroke="#1552b0" stroke-width="0.9" stroke-linejoin="round"/>
<path d="M1211.6,90.5 V83.2 H1183.6 V111.2 H1192.3 M1197.8,83.2 V97.4" stroke="#333" stroke-width="1.6"/>
<path d="M1195.2,112 L1195.2,108 L1207.8,95.4 C1209.3,94 1211.3,94 1212.4,95.4 C1213.6,96.6 1213.6,98.5 1212.2,99.8 L1199.4,112 Z" fill="#f4f4f4" stroke="#1552b0" stroke-width="1.9" stroke-linejoin="round"/>
<path d="M1205.4,97.8 L1209.9,102.3 M1195.6,108.6 L1198.8,111.6" stroke="#1552b0" stroke-width="1.7"/>
<path d="M1393.3,90.6 H1406.3 A8.7,8.7 0 0 1 1406.3,108 H1393.8 M1397.2,86.4 L1393.3,90.6 L1397.2,94.6" stroke="#444" stroke-width="1.6"/>
<path d="M1463.8,90.6 H1450.6 A8.7,8.7 0 0 0 1450.6,108 H1463.8 M1459.9,86.4 L1463.8,90.6 L1459.9,94.6" stroke="#444" stroke-width="1.6"/>
<circle cx="1502" cy="98.6" r="8.9" stroke="#7a7a7a" stroke-width="1.2"/>
<path d="M1497.8,94.4 L1506.2,102.8 M1506.2,94.4 L1497.8,102.8" stroke="#6f9ad6" stroke-width="1.2"/>
<circle cx="1635" cy="99.3" r="11.4" stroke="rgba(255,255,255,0.55)" stroke-width="1.4"/>
<path d="M1629.6,99.6 L1633.2,103.2 L1640.6,95.6" stroke="rgba(255,255,255,0.6)" stroke-width="1.4"/>
<rect x="35.9" y="172.4" width="25" height="26.4" rx="4" fill="#fff" stroke="#7a7a7a" stroke-width="1.4"/>
<rect x="35.9" y="225.3" width="25" height="26.20000000000001" rx="4" fill="#fff" stroke="#7a7a7a" stroke-width="1.4"/>
<rect x="35.9" y="275.3" width="25" height="24.4" rx="4" fill="#fff" stroke="#7a7a7a" stroke-width="1.4"/>
<rect x="35.9" y="324.1" width="25" height="25.4" rx="4" fill="#fff" stroke="#7a7a7a" stroke-width="1.4"/>
<rect x="35.9" y="374.2" width="25" height="24.4" rx="4" fill="#fff" stroke="#7a7a7a" stroke-width="1.4"/>
<path d="M103.4,172.8 L112.9,182.6 C111.8,183.9 110.8,184.6 109.4,184.9 L102.9,191 C103.6,193.6 102.8,196.3 100.6,198 L88.1,185.6 C89.9,183.6 92.9,182.8 95.4,183.6 L101.1,177.8 C100.7,175.9 101.6,174.1 103.4,172.8 Z" fill="#424242"/>
<path d="M84.6,201.3 L95,191" stroke="#424242" stroke-width="1.7" stroke-linecap="round"/>
<path d="M126,181.4 H138.5 M126,187 H146 M126,192.5 H146" stroke="#3a3a3a" stroke-width="1.4"/>
<path d="M284.9,181.4 H297.4 M284.9,187 H304.9 M284.9,192.5 H304.9" stroke="#3a3a3a" stroke-width="1.4"/>
<path d="M1035.9,181.4 H1048.4 M1035.9,187 H1055.9 M1035.9,192.5 H1055.9" stroke="#3a3a3a" stroke-width="1.4"/>
<path d="M1344,181.4 H1356.5 M1344,187 H1364 M1344,192.5 H1364" stroke="#3a3a3a" stroke-width="1.4"/>
<rect x="1535.6" y="177.8" width="20" height="17" rx="0.8" stroke="#555" stroke-width="1.2"/>
<path d="M1535.6,181.7 H1555.6" stroke="#444" stroke-width="1.4"/>
<path d="M1539.9,176.2 V179.6 M1551.5,176.2 V179.6" stroke="#555" stroke-width="1.3"/>
<rect x="1543.1499999999999" y="183.9" width="1.3" height="1.2" fill="#666"/>
<rect x="1547.1499999999999" y="183.9" width="1.3" height="1.2" fill="#666"/>
<rect x="1550.9499999999998" y="183.9" width="1.3" height="1.2" fill="#666"/>
<rect x="1539.25" y="186.4" width="1.3" height="1.2" fill="#666"/>
<rect x="1543.1499999999999" y="186.4" width="1.3" height="1.2" fill="#666"/>
<rect x="1547.1499999999999" y="186.4" width="1.3" height="1.2" fill="#666"/>
<rect x="1550.9499999999998" y="186.4" width="1.3" height="1.2" fill="#666"/>
<rect x="1539.25" y="189.0" width="1.3" height="1.2" fill="#666"/>
<rect x="1543.1499999999999" y="189.0" width="1.3" height="1.2" fill="#666"/>
<rect x="1547.1499999999999" y="189.0" width="1.3" height="1.2" fill="#666"/>
<rect x="1550.9499999999998" y="189.0" width="1.3" height="1.2" fill="#666"/>
<rect x="1539.25" y="191.70000000000002" width="1.3" height="1.2" fill="#666"/>
<rect x="1543.1499999999999" y="191.70000000000002" width="1.3" height="1.2" fill="#666"/>
<rect x="1547.1499999999999" y="191.70000000000002" width="1.3" height="1.2" fill="#666"/>
<path d="M1702.5,181.4 H1715.0 M1702.5,187 H1722.5 M1702.5,192.5 H1722.5" stroke="#3a3a3a" stroke-width="1.4"/>
<path d="M282.90,1142.90 L282.90,1135.10 M286.90,1136.60 L282.90,1140.60 L278.90,1136.60 M279.26,1145.00 L272.51,1141.10 M275.81,1138.39 L277.27,1143.85 L271.81,1145.31 M279.26,1149.20 L272.51,1153.10 M271.81,1148.89 L277.27,1150.35 L275.81,1155.81 M282.90,1151.30 L282.90,1159.10 M278.90,1157.60 L282.90,1153.60 L286.90,1157.60 M286.54,1149.20 L293.29,1153.10 M289.99,1155.81 L288.53,1150.35 L293.99,1148.89 M286.54,1145.00 L293.29,1141.10 M293.99,1145.31 L288.53,1143.85 L289.99,1138.39" stroke="#29b5e8" stroke-width="2.4" stroke-linecap="round"/>
<circle cx="282.9" cy="1147.1" r="1.8" stroke="#29b5e8" stroke-width="1.2"/>
<rect x="637.3" y="1139.3" width="23.2" height="17.2" rx="2" fill="#2060bb"/>
<path d="M638,1145.6 H660 M638,1151 H660 M648.9,1145.6 V1156" stroke="#fff" stroke-width="1.1"/>
<path d="M1557.37,1145.60 L1557.37,1150.40 L1554.14,1150.95 L1553.54,1152.38 L1555.45,1155.05 L1552.05,1158.45 L1549.38,1156.54 L1547.95,1157.14 L1547.40,1160.37 L1542.60,1160.37 L1542.05,1157.14 L1540.62,1156.54 L1537.95,1158.45 L1534.55,1155.05 L1536.46,1152.38 L1535.86,1150.95 L1532.63,1150.40 L1532.63,1145.60 L1535.86,1145.05 L1536.46,1143.62 L1534.55,1140.95 L1537.95,1137.55 L1540.62,1139.46 L1542.05,1138.86 L1542.60,1135.63 L1547.40,1135.63 L1547.95,1138.86 L1549.38,1139.46 L1552.05,1137.55 L1555.45,1140.95 L1553.54,1143.62 L1554.14,1145.05 Z" stroke="#4a4a4a" stroke-width="1.3" stroke-linejoin="round"/>
<circle cx="1545" cy="1148" r="5" stroke="#2c62b8" stroke-width="1.6"/>
<path d="M1706.8,1148.4 H1724.2 M1715.5,1139.6 V1157.1" stroke="#333" stroke-width="1.6"/>
<path d="M1844.5,1141 V1156.7" stroke="#a6a6a6" stroke-width="2"/>
<path d="M1859.8,1141.5 L1851.8,1148.9 L1859.8,1156.3 M1880.3,1141.5 L1872.3,1148.9 L1880.3,1156.3" stroke="#a6a6a6" stroke-width="2"/>
<path d="M1998.2,1141.5 L2006.2,1148.9 L1998.2,1156.3 M2018.3,1141.5 L2026.3,1148.9 L2018.3,1156.3" stroke="#a6a6a6" stroke-width="2"/>
<path d="M2032.8,1141 V1156.7" stroke="#a6a6a6" stroke-width="2"/>
<rect x="2055.2" y="1135.2" width="24.8" height="24.4" rx="1.5" fill="#b4f5d6" stroke="#2db86f" stroke-width="1"/>
<rect x="2055.2" y="1135.2" width="24.8" height="7.2" rx="1.5" fill="#33c481"/>
<path d="M2063.1,1135.5 V1159.5 M2071.5,1142.4 V1159.5 M2055.5,1147.6 H2080 M2055.5,1153.5 H2080" stroke="#2fb872" stroke-width="1"/>
<path d="M2051.4,1147.3 C2051.4,1144.5 2067.6,1144.5 2067.6,1147.3 V1161.3 C2067.6,1165 2051.4,1165 2051.4,1161.3 Z" fill="#185c37"/>
<path d="M2051.4,1147.3 C2051.4,1144.5 2067.6,1144.5 2067.6,1147.3 V1158.5 C2067.6,1160.5 2051.4,1160.5 2051.4,1158.5 Z" fill="#107c41"/>
<path d="M2051.4,1147.3 C2051.4,1144.5 2067.6,1144.5 2067.6,1147.3 V1152.5 C2067.6,1154.5 2051.4,1154.5 2051.4,1152.5 Z" fill="#21a366"/>
<ellipse cx="2059.5" cy="1147.3" rx="8.1" ry="1.9" fill="#33c481"/></svg>
<div style="position:absolute;left:0;top:0;width:2087px;height:1178px;z-index:6;"><span style="position:absolute;left:330.53px;top:72px;font-family:'Liberation Sans', sans-serif;font-size:15.43px;line-height:1;font-weight:700;color:#fff;white-space:pre;transform:scaleX(1.0052);transform-origin:0 0;">2</span></div>
<div style="position:absolute;left:0;top:0;width:2087px;height:1178px;z-index:10;"><div style="position:absolute;left:307.5px;top:118px;width:657.5px;height:277.5px;background:#fff;border-radius:0px;box-shadow:0 1px 6px rgba(0,0,0,0.28);"></div>
<div style="position:absolute;left:826.1px;top:128.7px;width:1.1999999999999318px;height:30.80000000000001px;background:#c8c8c8;border-radius:0px;"></div>
<div style="position:absolute;left:315px;top:188.3px;width:181px;height:52.5px;background:#fff;border:1.3px solid #dedede;box-sizing:border-box;border-radius:3px;"></div>
<div style="position:absolute;left:509px;top:188.3px;width:148.29999999999995px;height:52.5px;background:#fff;border:1.3px solid #dedede;box-sizing:border-box;border-radius:3px;"></div>
<div style="position:absolute;left:670.5px;top:188.3px;width:254.5px;height:52.5px;background:#fff;border:1.5px solid #e0e0e0;box-sizing:border-box;border-radius:0px;"></div>
<div style="position:absolute;left:315px;top:260px;width:181px;height:52px;background:#fff;border:1.3px solid #dedede;box-sizing:border-box;border-radius:3px;"></div>
<div style="position:absolute;left:509px;top:260px;width:148.29999999999995px;height:52px;background:#fff;border:1.3px solid #dedede;box-sizing:border-box;border-radius:3px;"></div>
<div style="position:absolute;left:670.5px;top:260px;width:254.5px;height:52px;background:#fff;border:1.5px solid #e0e0e0;box-sizing:border-box;border-radius:0px;"></div>
<div style="position:absolute;left:307.5px;top:333.4px;width:657.5px;height:1.2000000000000455px;background:#e6e6e6;border-radius:0px;"></div>
<div style="position:absolute;left:317.1px;top:351.2px;width:45.599999999999966px;height:22.30000000000001px;background:#f3f3f3;border:1px solid #5a5a5a;box-sizing:border-box;border-radius:12px;"></div>
<div style="position:absolute;left:818px;top:336.8px;width:140px;height:52.30000000000001px;background:#f3f3f3;border:2px solid #ff1010;box-sizing:border-box;border-radius:0px;box-shadow:inset 0 0 6px rgba(0,0,0,0.22);"></div>
<span style="position:absolute;left:359.40px;top:141px;font-family:'Liberation Sans', sans-serif;font-size:19.42px;line-height:1;font-weight:400;color:#3d3c3b;white-space:pre;transform:scaleX(0.9712);transform-origin:0 0;">And</span>
<span style="position:absolute;left:437.41px;top:141px;font-family:'Liberation Sans', sans-serif;font-size:19.42px;line-height:1;font-weight:400;color:#3d3c3b;white-space:pre;transform:scaleX(1.0125);transform-origin:0 0;">Or</span>
<span style="position:absolute;left:740.47px;top:137px;font-family:'Liberation Sans', sans-serif;font-size:18.57px;line-height:1;font-weight:700;color:#1873d3;white-space:pre;transform:scaleX(0.8779);transform-origin:0 0;">Add Filter</span>
<span style="position:absolute;left:860.20px;top:137px;font-family:'Liberation Sans', sans-serif;font-size:18.57px;line-height:1;font-weight:700;color:#1873d3;white-space:pre;transform:scaleX(0.8951);transform-origin:0 0;">Remove All</span>
<span style="position:absolute;left:333.03px;top:205px;font-family:'Liberation Sans', sans-serif;font-size:20.29px;line-height:1;font-weight:400;color:#464544;white-space:pre;transform:scaleX(0.8512);transform-origin:0 0;">JOBTITLE</span>
<span style="position:absolute;left:526.99px;top:208px;font-family:'Liberation Sans', sans-serif;font-size:16.44px;line-height:1;font-weight:400;color:#464544;white-space:pre;transform:scaleX(1.2350);transform-origin:0 0;">contains</span>
<span style="position:absolute;left:680.20px;top:206px;font-family:'Liberation Sans', sans-serif;font-size:19.18px;line-height:1;font-weight:400;color:#464544;white-space:pre;transform:scaleX(1.0410);transform-origin:0 0;">head</span>
<span style="position:absolute;left:332.53px;top:278px;font-family:'Liberation Sans', sans-serif;font-size:19.86px;line-height:1;font-weight:400;color:#464544;white-space:pre;transform:scaleX(0.8493);transform-origin:0 0;">SALARY</span>
<span style="position:absolute;left:527.34px;top:280px;font-family:'Liberation Sans', sans-serif;font-size:14.41px;line-height:1;font-weight:400;color:#464544;white-space:pre;transform:scaleX(1.1381);transform-origin:0 0;">&gt;</span>
<span style="position:absolute;left:680.15px;top:279px;font-family:'Liberation Mono', monospace;font-size:20.9px;line-height:1;font-weight:400;color:#464544;white-space:pre;transform:scaleX(0.8575);transform-origin:0 0;">18    </span>
<span style="position:absolute;left:375.86px;top:353px;font-family:'Liberation Sans', sans-serif;font-size:20.29px;line-height:1;font-weight:400;color:#464544;white-space:pre;transform:scaleX(0.9509);transform-origin:0 0;">Persist filters</span>
<span style="position:absolute;left:860.70px;top:357px;font-family:'Liberation Sans', sans-serif;font-size:20.87px;line-height:1;font-weight:400;color:#464544;white-space:pre;transform:scaleX(0.9001);transform-origin:0 0;">Advanced</span></div>
<svg style="position:absolute;left:0;top:0;z-index:11;" width="2087" height="1178" viewBox="0 0 2087 1178" fill="none"><circle cx="339.8" cy="149.8" r="9.2" stroke="#0f6cbd" stroke-width="1.5"/>
<circle cx="339.8" cy="149.8" r="5.4" fill="#0f6cbd"/>
<circle cx="419" cy="149.8" r="9.2" stroke="#0f6cbd" stroke-width="1.5"/>
<path d="M712.8,145 H733.4 M723.1,135.2 V154.8" stroke="#1a7fd4" stroke-width="1.6"/>
<path d="M838.8,136.96 H854.7 M844.21,136.96 L844.68,134.50 H849.13 L849.61,136.96 M840.61,136.96 V151.70 Q840.61,153.20 842.11,153.20 H851.77 Q853.27,153.20 853.27,151.70 V136.96" stroke="#1a7fd4" stroke-width="1.4"/>
<path d="M844.32,139.90 V149.90 M846.59,139.90 V149.90 M849.18,139.90 V149.90" stroke="#1a7fd4" stroke-width="1.1"/>
<path d="M462.6,211.5 L472,221.5 L481.4,211.5" stroke="#ababab" stroke-width="1.5"/>
<path d="M623.8,211.5 L633.2,221.5 L642.6,211.5" stroke="#ababab" stroke-width="1.5"/>
<path d="M938.3,207.60 H955 M943.98,207.60 L944.48,205.20 H949.15 L949.66,207.60 M940.20,207.60 V222.00 Q940.20,223.50 941.70,223.50 H952.00 Q953.50,223.50 953.50,222.00 V207.60" stroke="#444" stroke-width="1.4"/>
<path d="M944.09,210.48 V220.28 M946.48,210.48 V220.28 M949.21,210.48 V220.28" stroke="#444" stroke-width="1.1"/>
<path d="M462.6,283.2 L472,293.2 L481.4,283.2" stroke="#ababab" stroke-width="1.5"/>
<path d="M623.8,283.2 L633.2,293.2 L642.6,283.2" stroke="#ababab" stroke-width="1.5"/>
<path d="M938.3,279.30 H955 M943.98,279.30 L944.48,276.90 H949.15 L949.66,279.30 M940.20,279.30 V293.70 Q940.20,295.20 941.70,295.20 H952.00 Q953.50,295.20 953.50,293.70 V279.30" stroke="#444" stroke-width="1.4"/>
<path d="M944.09,282.18 V291.98 M946.48,282.18 V291.98 M949.21,282.18 V291.98" stroke="#444" stroke-width="1.1"/>
<circle cx="329" cy="362.4" r="6.4" fill="#333"/>
<path d="M829,355.8 H848 L840.5,364.5 M836.5,364.5 L829,355.8 M836.5,364.5 V373 H839.5" stroke="#444" stroke-width="1.4"/>
<circle cx="844" cy="369.3" r="2.6" stroke="#444" stroke-width="1.6"/>
<path d="M844,364.6 V366 M844,372.6 V374 M839.3,369.3 H840.7 M847.3,369.3 H848.7 M840.7,366 L841.6,366.9 M846.4,371.7 L847.3,372.6 M847.3,366 L846.4,366.9 M841.6,371.7 L840.7,372.6" stroke="#444" stroke-width="1.3"/>
<ellipse cx="707.03" cy="287.00" rx="3.48" ry="6.27" stroke="#464544" stroke-width="1.46"/><path d="M704.52,289.63 L709.54,284.37" stroke="#464544" stroke-width="1.32"/>
<ellipse cx="717.78" cy="287.00" rx="3.48" ry="6.27" stroke="#464544" stroke-width="1.46"/><path d="M715.28,289.63 L720.29,284.37" stroke="#464544" stroke-width="1.32"/>
<ellipse cx="728.54" cy="287.00" rx="3.48" ry="6.27" stroke="#464544" stroke-width="1.46"/><path d="M726.03,289.63 L731.04,284.37" stroke="#464544" stroke-width="1.32"/>
<ellipse cx="739.29" cy="287.00" rx="3.48" ry="6.27" stroke="#464544" stroke-width="1.46"/><path d="M736.78,289.63 L741.80,284.37" stroke="#464544" stroke-width="1.32"/></svg>
</body></html>
